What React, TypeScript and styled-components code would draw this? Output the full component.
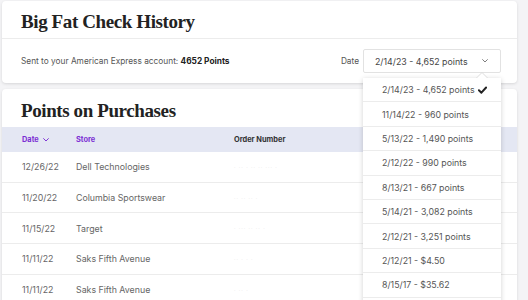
import React from 'react';
import styled, { createGlobalStyle } from 'styled-components';

const GlobalStyle = createGlobalStyle`
  html, body {
    margin: 0;
    padding: 0;
    background: #f4f4f6;
    font-family: Inter, "Noto Sans", sans-serif;
  }
`;

const Page = styled.div`
  width: 528px;
  height: 300px;
  overflow: hidden;
  box-sizing: border-box;
  padding: 1px 11px 0 2px;
  display: flex;
  flex-direction: column;
  gap: 6px;
`;

const Card = styled.section`
  background: #fff;
  border-radius: 4px;
  box-shadow: 0 1px 3px rgba(0, 0, 0, 0.12);
  flex-shrink: 0;
`;

const Title = styled.h1<{ $h: number }>`
  margin: 0;
  height: ${p => p.$h}px;
  box-sizing: border-box;
  padding: 5px 19px 0;
  display: flex;
  align-items: center;
  font-family: "Liberation Serif", serif;
  font-weight: 700;
  font-size: 19px;
  letter-spacing: -0.4px;
  color: #222;
`;

const CheckHead = styled(Title)`
  border-bottom: 1px solid #ececec;
`;

const SentRow = styled.div`
  height: 44px;
  padding: 0 16px 0 19px;
  display: flex;
  align-items: center;
  justify-content: space-between;
  font-size: 8.3px;
  color: #555;
  b {
    color: #222;
    font-weight: 700;
  }
`;

const DateField = styled.div`
  display: flex;
  align-items: center;
  gap: 4px;
  position: relative;
`;

const SelectBox = styled.div`
  width: 138px;
  height: 24px;
  box-sizing: border-box;
  border: 1px solid #e2e2e2;
  border-radius: 2px;
  display: flex;
  align-items: center;
  justify-content: space-between;
  padding: 0 12px 0 11px;
  font-size: 8.8px;
  color: #444;
`;

const Menu = styled.ul`
  position: absolute;
  top: 29px;
  right: 0;
  width: 138px;
  margin: 0;
  padding: 0 0 12px;
  list-style: none;
  background: #fff;
  box-shadow: 0 1px 5px rgba(0, 0, 0, 0.18);
  z-index: 5;
  &::before,
  &::after {
    content: '';
    position: absolute;
    right: 13px;
    border-left: 6px solid transparent;
    border-right: 6px solid transparent;
  }
  &::before {
    top: -6px;
    border-bottom: 6px solid #dcdcdc;
  }
  &::after {
    top: -5px;
    border-bottom: 6px solid #fff;
  }
`;

const MenuItem = styled.li`
  height: 24.4px;
  box-sizing: border-box;
  border-bottom: 1px solid #ececec;
  padding: 0 14px 0 19px;
  display: flex;
  align-items: center;
  justify-content: space-between;
  font-size: 8.8px;
  color: #555;
`;

const TableHead = styled.div`
  height: 25px;
  background: #e4e7f3;
  display: grid;
  grid-template-columns: 54px 158px 1fr;
  align-items: center;
  padding: 0 20px;
  font-size: 7.4px;
  font-weight: 700;
  color: #333;
`;

const HeadCell = styled.span<{ $accent?: boolean }>`
  color: ${p => (p.$accent ? '#7b2ed3' : '#333')};
  display: flex;
  align-items: center;
  gap: 4px;
`;

const Row = styled.div`
  height: 30.7px;
  box-sizing: border-box;
  border-bottom: 1px solid #ececec;
  display: grid;
  grid-template-columns: 54px 158px 1fr;
  align-items: center;
  padding: 0 20px;
  font-size: 8.8px;
  color: #666;
`;

const Redacted = styled.span`
  color: #e4e4e4;
  font-size: 5px;
  letter-spacing: 1px;
`;

const Chevron = ({ size = 7, color = '#777' }: { size?: number; color?: string }) => (
  <svg width={size} height={size * 0.6} viewBox="0 0 10 6" fill="none">
    <path d="M1 1l4 4 4-4" stroke={color} strokeWidth="1.6" strokeLinecap="round" strokeLinejoin="round" />
  </svg>
);

const Check = () => (
  <svg width="9" height="8" viewBox="0 0 10 8" fill="none">
    <path d="M1 4.2l2.8 2.8L9 1.2" stroke="#222" strokeWidth="2.2" strokeLinecap="round" strokeLinejoin="round" />
  </svg>
);

const checks = [
  '2/14/23 - 4,652 points',
  '11/14/22 - 960 points',
  '5/13/22 - 1,490 points',
  '2/12/22 - 990 points',
  '8/13/21 - 667 points',
  '5/14/21 - 3,082 points',
  '2/12/21 - 3,251 points',
  '2/12/21 - $4.50',
  '8/15/17 - $35.62',
];

const purchases = [
  { date: '12/26/22', store: 'Dell Technologies', order: '· ·· ·  ·· ·· ··· ·' },
  { date: '11/20/22', store: 'Columbia Sportswear', order: '·· ·· ··  ·' },
  { date: '11/15/22', store: 'Target', order: '· ··· ·· ·· ·' },
  { date: '11/11/22', store: 'Saks Fifth Avenue', order: '·· ·   · ·' },
  { date: '11/11/22', store: 'Saks Fifth Avenue', order: '·  ·· ·' },
];

export default function App() {
  return (
    <>
      <GlobalStyle />
      <Page>
        <Card>
          <CheckHead $h={38}>Big Fat Check History</CheckHead>
          <SentRow>
            <span>
              Sent to your American Express account: <b>4652 Points</b>
            </span>
            <DateField>
              <span>Date</span>
              <SelectBox>
                <span>{checks[0]}</span>
                <Chevron size={6} />
              </SelectBox>
              <Menu>
                {checks.map((c, i) => (
                  <MenuItem key={c + i}>
                    <span>{c}</span>
                    {i === 0 && <Check />}
                  </MenuItem>
                ))}
              </Menu>
            </DateField>
          </SentRow>
        </Card>
        <Card>
          <Title $h={38}>Points on Purchases</Title>
          <TableHead>
            <HeadCell $accent>
              Date <Chevron size={6} color="#7b2ed3" />
            </HeadCell>
            <HeadCell $accent>Store</HeadCell>
            <HeadCell>Order Number</HeadCell>
          </TableHead>
          {purchases.map((p, i) => (
            <Row key={i}>
              <span>{p.date}</span>
              <span>{p.store}</span>
              <Redacted>{p.order}</Redacted>
            </Row>
          ))}
        </Card>
      </Page>
    </>
  );
}
